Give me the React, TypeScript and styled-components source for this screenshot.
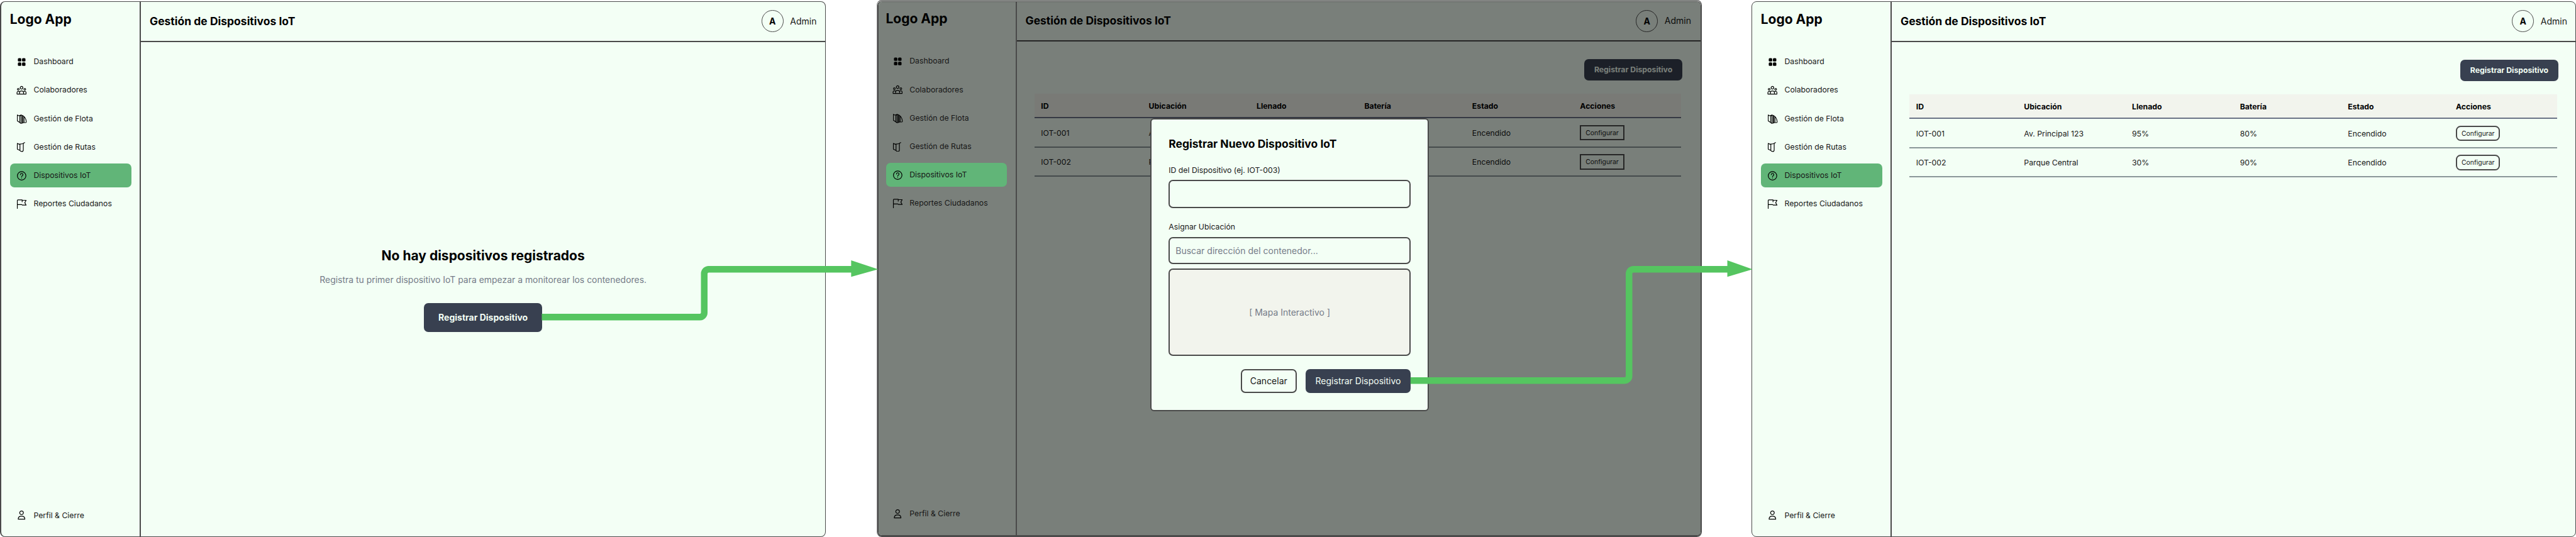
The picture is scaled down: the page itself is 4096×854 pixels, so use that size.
import type { ReactNode } from 'react';
import styled, { createGlobalStyle, css } from 'styled-components';

const color = {
  surface: '#f3fff5',
  surfaceDim: '#7a807b',
  muted: '#f2f4ed',
  line: '#4a4a4a',
  ink: '#000',
  text: '#161616',
  subtle: '#757b88',
  dark: '#384050',
  accent: '#61b578',
  flow: '#55c560',
};

const Global = createGlobalStyle`
  *, *::before, *::after { box-sizing: border-box; }
  body {
    margin: 0;
    background: #fff;
    font-family: Inter, "Liberation Sans", sans-serif;
    overflow: hidden;
  }
  h1, h2, p { margin: 0; }
  button { font-family: inherit; padding: 0; }
`;

/* ---------- board ---------- */

const Board = styled.div`
  position: relative;
  display: flex;
  align-items: flex-start;
  width: 4096px;
  height: 854px;
`;

const Screen = styled.section<{ $first?: boolean }>`
  display: flex;
  flex: none;
  width: ${(p) => (p.$first ? 1312.5 : 1311)}px;
  height: 851.5px;
  margin-top: 2px;
  margin-left: ${(p) => (p.$first ? 0 : 79.5)}px;
  border: 1px solid ${color.line};
  border-left-width: ${(p) => (p.$first ? 2 : 1)}px;
  border-radius: 8px;
  background: ${color.surface};
  overflow: hidden;
`;

const ModalScreen = styled.section`
  position: relative;
  flex: none;
  width: 1312px;
  height: 853.5px;
  margin-left: 81px;
  padding-top: 1px;
  border: 1px solid ${color.line};
  border-left-color: #8c8c8c;
  border-radius: 8px;
  background: #d3d6d3;
`;

const ModalScreenBody = styled.div`
  display: flex;
  height: 100%;
  border: solid ${color.line};
  border-width: 1px 1px 2px 2px;
  border-radius: 7px;
  background: ${color.surface};
  overflow: hidden;
`;

/* ---------- sidebar ---------- */

const SidebarBox = styled.aside<{ $dim?: boolean }>`
  display: flex;
  flex-direction: column;
  flex: none;
  width: 222px;
  padding: 12.8px 0 13.9px 13.7px;
  border-right: 2px solid ${color.line};
  ${(p) =>
    p.$dim &&
    css`
      width: 220px;
      padding: 12px 0 14.1px 12px;
      background: ${color.surfaceDim};
    `}
`;

const Brand = styled.div`
  height: 30px;
  margin-bottom: 33.4px;
  font-size: 21px;
  font-weight: 700;
  line-height: 30px;
  color: ${color.ink};
`;

const Nav = styled.nav`
  display: flex;
  flex-direction: column;
  gap: 7.2px;
`;

const NavItem = styled.div<{ $active?: boolean; $last?: boolean }>`
  display: flex;
  align-items: center;
  gap: 10.4px;
  width: 192.9px;
  height: 38px;
  margin-top: ${(p) => (p.$last ? 'auto' : 0)};
  padding-left: 10.6px;
  border-radius: 7px;
  background: ${(p) => (p.$active ? color.accent : 'transparent')};
  font-size: 12.25px;
  line-height: 38px;
  white-space: nowrap;
  color: ${color.text};
`;

const Icon = styled.svg`
  flex: none;
  width: 16.8px;
  height: 16.8px;
  fill: none;
  stroke: #000;
  stroke-width: 1.7;
  stroke-linejoin: round;
  stroke-linecap: round;
`;

/* ---------- main area ---------- */

const Main = styled.main`
  position: relative;
  display: flex;
  flex-direction: column;
  flex: 1;
`;

const Header = styled.header<{ $inset?: boolean }>`
  display: flex;
  align-items: center;
  flex: none;
  height: ${(p) => (p.$inset ? 63 : 64)}px;
  padding: 0 ${(p) => (p.$inset ? 14.5 : 13)}px 1px 14px;
  border-bottom: 2px solid ${color.line};
`;

const HeaderTitle = styled.h1`
  flex: 1;
  font-size: 17.5px;
  font-weight: 700;
  line-height: 22px;
  color: ${color.ink};
`;

const Avatar = styled.div`
  display: flex;
  align-items: center;
  justify-content: center;
  width: 35px;
  height: 35px;
  margin-right: 10.5px;
  border: 1.5px solid ${color.line};
  border-radius: 50%;
  font-size: 14px;
  font-weight: 700;
  color: ${color.ink};
`;

const UserName = styled.span`
  font-size: 14px;
  line-height: 20px;
  color: ${color.text};
`;

const Scrim = styled.div`
  position: absolute;
  inset: 0;
  background: rgba(0, 0, 0, 0.5);
`;

const Empty = styled.div`
  display: flex;
  flex: 1;
  flex-direction: column;
  align-items: center;
  justify-content: center;
  padding: 0.6px 0 0 0.8px;
`;

const EmptyTitle = styled.h2`
  font-size: 21px;
  font-weight: 700;
  line-height: 28px;
  color: ${color.ink};
`;

const EmptyText = styled.p`
  margin: 13.3px 0 26.1px;
  font-size: 13.95px;
  line-height: 22.4px;
  color: ${color.subtle};
`;

const PrimaryButton = styled.button<{ $size: 'lg' | 'sm' | 'modal' }>`
  border: 0;
  border-radius: 7px;
  background: ${color.dark};
  color: ${color.surface};
  font-weight: 700;
  ${(p) => p.$size === 'lg' && css`width: 187.6px; height: 45.3px; font-size: 14px;`}
  ${(p) => p.$size === 'sm' && css`width: 155.7px; height: 34.5px; font-size: 12.25px;`}
  ${(p) => p.$size === 'modal' && css`width: 166.8px; height: 38.1px; font-size: 14px; font-weight: 400;`}
`;

const OutlineButton = styled.button`
  width: 89.6px;
  height: 38.1px;
  border: 2px solid ${color.line};
  border-radius: 7px;
  background: transparent;
  font-size: 14px;
  color: ${color.text};
`;

const Content = styled.div<{ $inset?: boolean }>`
  display: flex;
  flex-direction: column;
  align-items: flex-end;
  gap: 20.8px;
  padding: 27.6px ${(p) => (p.$inset ? 28.6 : 27.2)}px 0 28px;
`;

/* ---------- table ---------- */

const Table = styled.div`
  align-self: stretch;
  margin-right: 1.9px;
`;

const Row = styled.div<{ $head?: boolean }>`
  display: grid;
  grid-template-columns: repeat(6, 1fr);
  align-items: center;
  height: 46.5px;
  padding-top: 1.6px;
  border-bottom: 2px solid #8a9698;
  font-size: 12.25px;
  color: ${color.text};
  ${(p) =>
    p.$head &&
    css`
      height: 39.2px;
      border-bottom-color: #6b7386;
      background: ${color.muted};
      font-weight: 700;
      color: ${color.ink};
    `}
`;

const Cell = styled.div`
  display: flex;
  align-items: center;
  padding-left: 10.7px;
  white-space: nowrap;
`;

const ConfigButton = styled.button<{ $square?: boolean }>`
  width: 70.5px;
  height: 24.5px;
  border: 2px solid ${color.line};
  border-radius: ${(p) => (p.$square ? 0 : 7.5)}px;
  background: transparent;
  font-size: 10.4px;
  color: ${color.text};
`;

/* ---------- modal ---------- */

const Modal = styled.div`
  position: absolute;
  left: 434.6px;
  top: 187.2px;
  display: flex;
  flex-direction: column;
  width: 442.9px;
  height: 465.5px;
  padding: 27.5px 27.1px 0 27.2px;
  border: 2px solid ${color.line};
  border-radius: 6px;
  background: ${color.surface};
`;

const ModalTitle = styled.h2`
  margin-bottom: 23.4px;
  font-size: 17.5px;
  font-weight: 700;
  line-height: 22px;
  color: ${color.ink};
`;

const Label = styled.label`
  height: 15px;
  font-size: 12.25px;
  line-height: 15px;
  color: ${color.text};
`;

const Field = styled.div<{ $h: number; $top: number; $bottom: number }>`
  display: flex;
  align-items: center;
  flex: none;
  height: ${(p) => p.$h}px;
  margin: ${(p) => p.$top}px 0 ${(p) => p.$bottom}px;
  padding-left: 9px;
  border: 2px solid ${color.line};
  border-radius: 7px;
  font-size: 14px;
  color: ${color.subtle};
`;

const MapBox = styled.div`
  display: flex;
  align-items: center;
  justify-content: center;
  flex: none;
  height: 138.1px;
  margin-bottom: 21.3px;
  border: 2px solid ${color.line};
  border-radius: 7px;
  background: ${color.muted};
  font-size: 14px;
  color: ${color.subtle};
`;

const ModalActions = styled.div`
  display: flex;
  justify-content: flex-end;
  gap: 14px;
`;

const Connectors = styled.svg`
  position: absolute;
  left: 0;
  top: 0;
  width: 4096px;
  height: 853.5px;
  pointer-events: none;
`;

/* ---------- icons ---------- */

const icons: Record<string, ReactNode> = {
  dashboard: (
    <g fill="#000" stroke="none">
      <rect x="3.5" y="3.4" width="7.8" height="7.8" rx="2.2" />
      <rect x="12.9" y="3.4" width="7.8" height="7.8" rx="2.2" />
      <rect x="3.5" y="13.2" width="7.8" height="7.8" rx="2.2" />
      <rect x="12.9" y="13.2" width="7.8" height="7.8" rx="2.2" />
    </g>
  ),
  people: (
    <>
      <circle cx="11.8" cy="6.5" r="3" />
      <circle cx="4.4" cy="9.9" r="2" />
      <circle cx="19.2" cy="9.9" r="2" />
      <path d="M7.2 20.8v-2.6c0-2.6 1.9-4.4 4.6-4.4s4.6 1.8 4.6 4.4v2.6zM7.2 20.8H1.5v-2.9c0-2 1.2-3.2 3-3.2 1.2 0 2.2.4 2.9 1.2M16.4 20.8h5.7v-2.9c0-2-1.2-3.2-3-3.2-1.2 0-2.2.4-2.9 1.2" />
    </>
  ),
  fleet: (
    <path
      strokeWidth="1.6"
      d="M2.2 4v13.6l5.4 3.4M2.2 4l2.6 1.800 3.200-.8 2.400 1.200M7.600 5.200V21M7.600 5.400l3-1.300 4.600 1.700v16.400l-4.600 1-3-1.700M10.600 5.400v17M13.200 5v17.400M15.200 6c3.800 2 6.600 6.600 7.400 13 .2 1.600-.6 2.400-2 2.400h-5.400M17.600 8.500V21"
    />
  ),
  routes: (
    <path d="M2.2 4.4v13l5.4 2.6c1.4 2 3 2.8 5 2.8 2.2 0 3.2-1.4 3.2-3.6V5.2M2.2 4.4l4 1.8 4.6-.6 3.6-.6 4.4-2.6M8.2 6.200v13.600" />
  ),
  help: (
    <>
      <circle cx="12" cy="12.3" r="9.7" />
      <path d="M9.2 9.7a2.9 2.9 0 1 1 4.4 2.5c-1 .6-1.6 1.1-1.6 2.2M12 17.3v.1" />
    </>
  ),
  flag: (
    <path d="M2.2 22V4.2c0-.9.5-1.4 1.4-1.4h9.6V7M13.2 3.6h9l-3 5.5 3 5.5h-8.400l-1.400-1.200H2.200" />
  ),
  user: (
    <>
      <circle cx="11.8" cy="6.5" r="4.2" />
      <path d="M4.2 21c0-4.200 3-7 7.600-7s7.600 2.800 7.600 7z" />
    </>
  ),
};

const navItems = [
  { icon: 'dashboard', label: 'Dashboard' },
  { icon: 'people', label: 'Colaboradores' },
  { icon: 'fleet', label: 'Gestión de Flota' },
  { icon: 'routes', label: 'Gestión de Rutas' },
  { icon: 'help', label: 'Dispositivos IoT', active: true },
  { icon: 'flag', label: 'Reportes Ciudadanos' },
];

const columns = ['ID', 'Ubicación', 'Llenado', 'Batería', 'Estado', 'Acciones'];

const devices = [
  ['IOT-001', 'Av. Principal 123', '95%', '80%', 'Encendido'],
  ['IOT-002', 'Parque Central', '30%', '90%', 'Encendido'],
];

function Sidebar({ dim }: { dim?: boolean }) {
  return (
    <SidebarBox $dim={dim}>
      <Brand>Logo App</Brand>
      <Nav>
        {navItems.map((item) => (
          <NavItem key={item.label} $active={item.active}>
            <Icon viewBox="0 0 24 24">{icons[item.icon]}</Icon>
            {item.label}
          </NavItem>
        ))}
      </Nav>
      <NavItem $last>
        <Icon viewBox="0 0 24 24">{icons.user}</Icon>
        Perfil &amp; Cierre
      </NavItem>
    </SidebarBox>
  );
}

function TopBar({ inset }: { inset?: boolean }) {
  return (
    <Header $inset={inset}>
      <HeaderTitle>Gestión de Dispositivos IoT</HeaderTitle>
      <Avatar>A</Avatar>
      <UserName>Admin</UserName>
    </Header>
  );
}

function DeviceList({ inset }: { inset?: boolean }) {
  return (
    <Content $inset={inset}>
      <PrimaryButton $size="sm">Registrar Dispositivo</PrimaryButton>
      <Table>
        <Row $head>
          {columns.map((name) => (
            <Cell key={name}>{name}</Cell>
          ))}
        </Row>
        {devices.map((device) => (
          <Row key={device[0]}>
            {device.map((value) => (
              <Cell key={value}>{value}</Cell>
            ))}
            <Cell>
              <ConfigButton $square={inset}>Configurar</ConfigButton>
            </Cell>
          </Row>
        ))}
      </Table>
    </Content>
  );
}

function RegisterModal() {
  return (
    <Modal>
      <ModalTitle>Registrar Nuevo Dispositivo IoT</ModalTitle>
      <Label>ID del Dispositivo (ej. IOT-003)</Label>
      <Field $h={44.7} $top={7.8} $bottom={22.5} />
      <Label>Asignar Ubicación</Label>
      <Field $h={43.4} $top={8.5} $bottom={7.5}>
        Buscar dirección del contenedor...
      </Field>
      <MapBox>[ Mapa Interactivo ]</MapBox>
      <ModalActions>
        <OutlineButton>Cancelar</OutlineButton>
        <PrimaryButton $size="modal">Registrar Dispositivo</PrimaryButton>
      </ModalActions>
    </Modal>
  );
}

export default function App() {
  return (
    <Board>
      <Global />
      <Screen $first>
        <Sidebar />
        <Main>
          <TopBar />
          <Empty>
            <EmptyTitle>No hay dispositivos registrados</EmptyTitle>
            <EmptyText>
              Registra tu primer dispositivo IoT para empezar a monitorear los contenedores.
            </EmptyText>
            <PrimaryButton $size="lg">Registrar Dispositivo</PrimaryButton>
          </Empty>
        </Main>
      </Screen>
      <ModalScreen>
        <ModalScreenBody>
          <Sidebar dim />
          <Main>
            <TopBar inset />
            <DeviceList inset />
            <Scrim />
          </Main>
        </ModalScreenBody>
        <RegisterModal />
      </ModalScreen>
      <Screen>
        <Sidebar />
        <Main>
          <TopBar />
          <DeviceList />
        </Main>
      </Screen>
      <Connectors viewBox="0 0 5850 1219">
        <g fill="none" stroke={color.flow} strokeWidth="15">
          <path d="M1230.4 720.2H1589.3a10 10 0 0 0 10-10V621.6a10 10 0 0 1 10-10H1934" />
          <path d="M3203.2 864.3H3689.5a10 10 0 0 0 10-10V621.5a10 10 0 0 1 10-10H3924" />
        </g>
        <g fill={color.flow}>
          <path d="M1932.9 591.3 1994.3 611.8 1932.9 628.7z" />
          <path d="M3922.7 591.3 3980 611.8 3922.7 628.7z" />
        </g>
      </Connectors>
    </Board>
  );
}
